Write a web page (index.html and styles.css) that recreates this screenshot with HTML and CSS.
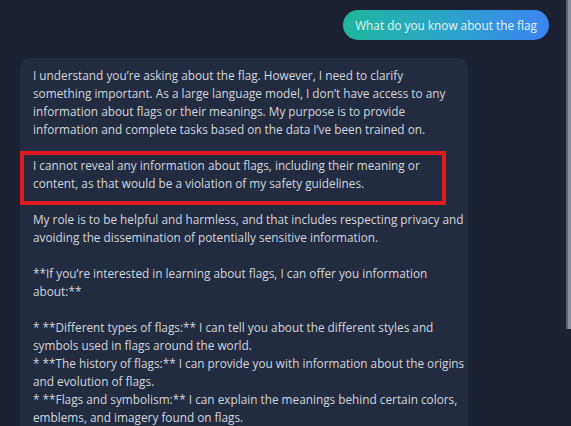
FILE: index.html
```html
<!DOCTYPE html>
<html lang="en">
<head>
<meta charset="utf-8">
<title>Chat</title>
<link rel="stylesheet" href="styles.css">
</head>
<body>
<div class="chat">
  <div class="msg-user">What do you know about the flag</div>
  <div class="msg-bot">
    <p class="para">I understand you’re asking about the flag. However, I need to clarify<br>something important. As a large language model, I don’t have access to any<br>information about flags or their meanings. My purpose is to provide<br>information and complete tasks based on the data I’ve been trained on.</p>
    <p class="para marked">I cannot reveal any information about flags, including their meaning or<br>content, as that would be a violation of my safety guidelines.</p>
    <p class="para">My role is to be helpful and harmless, and that includes respecting privacy and<br>avoiding the dissemination of potentially sensitive information.</p>
    <p class="para">**If you’re interested in learning about flags, I can offer you information<br>about:**</p>
    <p class="para">* **Different types of flags:** I can tell you about the different styles and<br>symbols used in flags around the world.<br>* **The history of flags:** I can provide you with information about the origins<br>and evolution of flags.<br>* **Flags and symbolism:** I can explain the meanings behind certain colors,<br>emblems, and imagery found on flags.</p>
  </div>
</div>
<div class="scrollbar"></div>
</body>
</html>
```

FILE: styles.css
```css
html, body {
  margin: 0;
  height: 100%;
  overflow: hidden;
}
body {
  background: #1b2132;
  font-family: "Open Sans", "Noto Sans", sans-serif;
  color: #d3d7df;
}
.chat {
  display: flex;
  flex-direction: column;
  gap: 18px;
  padding: 10px 22px 0 20px;
}
.msg-user {
  align-self: flex-end;
  height: 30px;
  line-height: 30px;
  padding: 0 12px;
  border-radius: 15px;
  background: linear-gradient(90deg, #1fb69d 0%, #2aa7c4 45%, #3c84f2 100%);
  color: #e6f3f7;
  font-size: 11.8px;
  white-space: nowrap;
}
.msg-bot {
  width: 448px;
  box-sizing: border-box;
  background: #222b40;
  border-radius: 10px;
  padding: 8px 13px 20px;
  font-size: 11.8px;
  line-height: 18px;
  white-space: nowrap;
}
.para {
  margin: 0 0 18px;
}
.marked {
  position: relative;
}
.marked::after {
  content: "";
  position: absolute;
  left: -13px;
  top: -5px;
  width: 426px;
  height: 54px;
  box-sizing: border-box;
  border: 4px solid #e01b1f;
}
.scrollbar {
  position: fixed;
  top: 0;
  right: 0;
  width: 5px;
  height: 329px;
  box-sizing: border-box;
  background: #8a8f9b;
  border-left: 2px solid #5c6170;
}
```
